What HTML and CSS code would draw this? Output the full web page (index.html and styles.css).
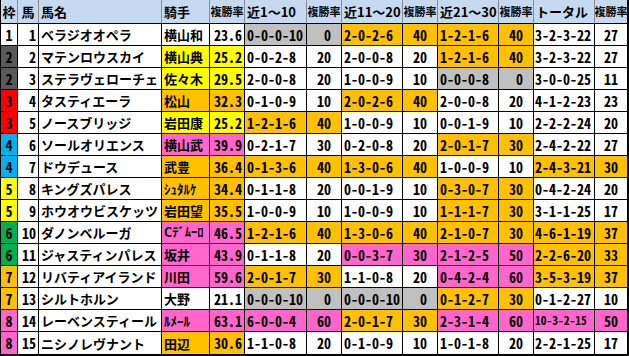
FILE: index.html
```html
<!DOCTYPE html>
<html lang="ja">
<head>
<meta charset="utf-8">
<title>出走馬データ</title>
<link rel="stylesheet" href="styles.css">
</head>
<body>
<div class="sheet">
  <div class="row head">
    <div class="c ctr">枠</div>
    <div class="c ctr">馬</div>
    <div class="c l">馬名</div>
    <div class="c l">騎手</div>
    <div class="c hr">複勝率</div>
    <div class="c l">近1～10</div>
    <div class="c hr">複勝率</div>
    <div class="c l">近11～20</div>
    <div class="c hr">複勝率</div>
    <div class="c l">近21～30</div>
    <div class="c hr">複勝率</div>
    <div class="c l">トータル</div>
    <div class="c hr">複勝率</div>
  </div>

  <div class="row">
    <div class="c ctr n w1">1</div><div class="c r n">1</div><div class="c l">ベラジオオペラ</div>
    <div class="c l jk">横山和</div><div class="c r n">23.6</div>
    <div class="c l n g">0-0-0-10</div><div class="c rate n g">0</div>
    <div class="c l n o">2-0-2-6</div><div class="c rate n o">40</div>
    <div class="c l n o">1-2-1-6</div><div class="c rate n o">40</div>
    <div class="c tl n">3-2-3-22</div><div class="c ctr n">27</div>
  </div>
  <div class="row">
    <div class="c ctr n w2">2</div><div class="c r n">2</div><div class="c l">マテンロウスカイ</div>
    <div class="c l jk y">横山典</div><div class="c r n y">25.2</div>
    <div class="c l n">0-0-2-8</div><div class="c rate n">20</div>
    <div class="c l n">2-0-0-8</div><div class="c rate n">20</div>
    <div class="c l n o">1-2-1-6</div><div class="c rate n o">40</div>
    <div class="c tl n">3-2-3-22</div><div class="c ctr n">27</div>
  </div>
  <div class="row">
    <div class="c ctr n w2">2</div><div class="c r n">3</div><div class="c l">ステラヴェローチェ</div>
    <div class="c l jk y">佐々木</div><div class="c r n y">29.5</div>
    <div class="c l n">2-0-0-8</div><div class="c rate n">20</div>
    <div class="c l n">1-0-0-9</div><div class="c rate n">10</div>
    <div class="c l n g">0-0-0-8</div><div class="c rate n g">0</div>
    <div class="c tl n">3-0-0-25</div><div class="c ctr n">11</div>
  </div>
  <div class="row">
    <div class="c ctr n w3">3</div><div class="c r n">4</div><div class="c l">タスティエーラ</div>
    <div class="c l jk o">松山</div><div class="c r n o">32.3</div>
    <div class="c l n">0-1-0-9</div><div class="c rate n">10</div>
    <div class="c l n o">2-0-2-6</div><div class="c rate n o">40</div>
    <div class="c l n">2-0-0-8</div><div class="c rate n">20</div>
    <div class="c tl n">4-1-2-23</div><div class="c ctr n">23</div>
  </div>
  <div class="row">
    <div class="c ctr n w3">3</div><div class="c r n">5</div><div class="c l">ノースブリッジ</div>
    <div class="c l jk y">岩田康</div><div class="c r n y">25.2</div>
    <div class="c l n o">1-2-1-6</div><div class="c rate n o">40</div>
    <div class="c l n">1-0-0-9</div><div class="c rate n">10</div>
    <div class="c l n">0-0-1-9</div><div class="c rate n">10</div>
    <div class="c tl n">2-2-2-24</div><div class="c ctr n">20</div>
  </div>
  <div class="row">
    <div class="c ctr n w4">4</div><div class="c r n">6</div><div class="c l">ソールオリエンス</div>
    <div class="c l jk p">横山武</div><div class="c r n p">39.9</div>
    <div class="c l n">0-2-1-7</div><div class="c rate n">30</div>
    <div class="c l n">0-2-0-8</div><div class="c rate n">20</div>
    <div class="c l n o">2-0-1-7</div><div class="c rate n o">30</div>
    <div class="c tl n">2-4-2-22</div><div class="c ctr n">27</div>
  </div>
  <div class="row">
    <div class="c ctr n w4">4</div><div class="c r n">7</div><div class="c l">ドウデュース</div>
    <div class="c l jk o">武豊</div><div class="c r n o">36.4</div>
    <div class="c l n o">0-1-3-6</div><div class="c rate n o">40</div>
    <div class="c l n o">1-3-0-6</div><div class="c rate n o">40</div>
    <div class="c l n">1-0-0-9</div><div class="c rate n">10</div>
    <div class="c tl n o">2-4-3-21</div><div class="c ctr n o">30</div>
  </div>
  <div class="row">
    <div class="c ctr n w5">5</div><div class="c r n">8</div><div class="c l">キングズパレス</div>
    <div class="c l jk o">ｼｭﾀﾙｹ</div><div class="c r n o">34.4</div>
    <div class="c l n">0-1-1-8</div><div class="c rate n">20</div>
    <div class="c l n">0-0-1-9</div><div class="c rate n">10</div>
    <div class="c l n o">0-3-0-7</div><div class="c rate n o">30</div>
    <div class="c tl n">0-4-2-24</div><div class="c ctr n">20</div>
  </div>
  <div class="row">
    <div class="c ctr n w5">5</div><div class="c r n">9</div><div class="c l">ホウオウビスケッツ</div>
    <div class="c l jk o">岩田望</div><div class="c r n o">35.5</div>
    <div class="c l n">1-0-0-9</div><div class="c rate n">10</div>
    <div class="c l n">1-0-0-9</div><div class="c rate n">10</div>
    <div class="c l n o">1-1-1-7</div><div class="c rate n o">30</div>
    <div class="c tl n">3-1-1-25</div><div class="c ctr n">17</div>
  </div>
  <div class="row">
    <div class="c ctr n w6">6</div><div class="c r n">10</div><div class="c l">ダノンベルーガ</div>
    <div class="c l jk p sm">Cﾃﾞﾑｰﾛ</div><div class="c r n p">46.5</div>
    <div class="c l n o">1-2-1-6</div><div class="c rate n o">40</div>
    <div class="c l n o">1-3-0-6</div><div class="c rate n o">40</div>
    <div class="c l n o">2-1-0-7</div><div class="c rate n o">30</div>
    <div class="c tl n o">4-6-1-19</div><div class="c ctr n o">37</div>
  </div>
  <div class="row">
    <div class="c ctr n w6">6</div><div class="c r n">11</div><div class="c l">ジャスティンパレス</div>
    <div class="c l jk p">坂井</div><div class="c r n p">43.9</div>
    <div class="c l n">0-1-1-8</div><div class="c rate n">20</div>
    <div class="c l n p">0-0-3-7</div><div class="c rate n p">30</div>
    <div class="c l n p">2-1-2-5</div><div class="c rate n p">50</div>
    <div class="c tl n o">2-2-6-20</div><div class="c ctr n o">33</div>
  </div>
  <div class="row">
    <div class="c ctr n w7">7</div><div class="c r n">12</div><div class="c l">リバティアイランド</div>
    <div class="c l jk p">川田</div><div class="c r n p">59.6</div>
    <div class="c l n o">2-0-1-7</div><div class="c rate n o">30</div>
    <div class="c l n">1-1-0-8</div><div class="c rate n">20</div>
    <div class="c l n p">0-4-2-4</div><div class="c rate n p">60</div>
    <div class="c tl n o">3-5-3-19</div><div class="c ctr n o">37</div>
  </div>
  <div class="row">
    <div class="c ctr n w7">7</div><div class="c r n">13</div><div class="c l">シルトホルン</div>
    <div class="c l jk">大野</div><div class="c r n">21.1</div>
    <div class="c l n g">0-0-0-10</div><div class="c rate n g">0</div>
    <div class="c l n g">0-0-0-10</div><div class="c rate n g">0</div>
    <div class="c l n o">0-1-2-7</div><div class="c rate n o">30</div>
    <div class="c tl n">0-1-2-27</div><div class="c ctr n">10</div>
  </div>
  <div class="row">
    <div class="c ctr n w8">8</div><div class="c r n">14</div><div class="c l">レーベンスティール</div>
    <div class="c l jk p">ﾙﾒｰﾙ</div><div class="c r n p">63.1</div>
    <div class="c l n p">6-0-0-4</div><div class="c rate n p">60</div>
    <div class="c l n o">2-0-1-7</div><div class="c rate n o">30</div>
    <div class="c l n p">2-3-1-4</div><div class="c rate n p">60</div>
    <div class="c tl n p xs">10-3-2-15</div><div class="c ctr n p">50</div>
  </div>
  <div class="row">
    <div class="c ctr n w8">8</div><div class="c r n">15</div><div class="c l">ニシノレヴナント</div>
    <div class="c l jk o">田辺</div><div class="c r n o">30.6</div>
    <div class="c l n">1-1-0-8</div><div class="c rate n">20</div>
    <div class="c l n">0-1-0-9</div><div class="c rate n">10</div>
    <div class="c l n">1-0-1-8</div><div class="c rate n">20</div>
    <div class="c tl n">2-2-1-25</div><div class="c ctr n">17</div>
  </div>
</div>
</body>
</html>
```
FILE: styles.css
```css
html, body {
  margin: 0;
  padding: 0;
  background: #fff;
}

.sheet {
  width: 629px;
  box-sizing: border-box;
  border-left: 1px solid #000;
  border-right: 2px solid #000;
  border-bottom: 2px solid #000;
  display: flex;
  flex-direction: column;
  font-family: "Noto Sans CJK JP", sans-serif;
  font-weight: bold;
  font-size: 13px;
  color: #000;
}

.row {
  display: grid;
  grid-template-columns: 17px 21px 123px 48px 35px 62px 35px 61px 35px 61px 35px 61px 32px;
  height: 22px;
}

.row.head {
  height: 24px;
  background: #c5d9f1;
}

.c {
  box-sizing: border-box;
  border-right: 1px solid #000;
  border-bottom: 1px solid #000;
  display: flex;
  align-items: center;
  white-space: nowrap;
  overflow: hidden;
  line-height: 1;
}

.head .c {
  border-right-color: #8c8c8c;
  border-bottom-color: #000;
}

.c:last-child {
  border-right: 0;
}

.row:last-child .c {
  border-bottom: 0;
}

.l { padding-left: 2px; }
.tl { padding-left: 1px; }
.r { justify-content: flex-end; padding-right: 2px; }
.ctr { justify-content: center; }
.rate { justify-content: flex-end; padding-right: 10px; }
.hr { justify-content: center; font-size: 11px; }

.n {
  font-size: 14px;
  font-feature-settings: "hwid" 1;
}

.jk { padding-left: 2px; }
.sm { font-size: 12.5px; }
.xs { font-size: 11.5px; }

.o { background: #ffc000; }
.y { background: #ffff00; }
.p { background: #ff66cc; }
.g { background: #c0c0c0; }

.w1 { background: #ffffff; }
.w2 { background: #595959; }
.w3 { background: #ff0000; }
.w4 { background: #00b0f0; }
.w5 { background: #ffff00; }
.w6 { background: #00b050; }
.w7 { background: #ffc000; }
.w8 { background: #ff66cc; }
```
